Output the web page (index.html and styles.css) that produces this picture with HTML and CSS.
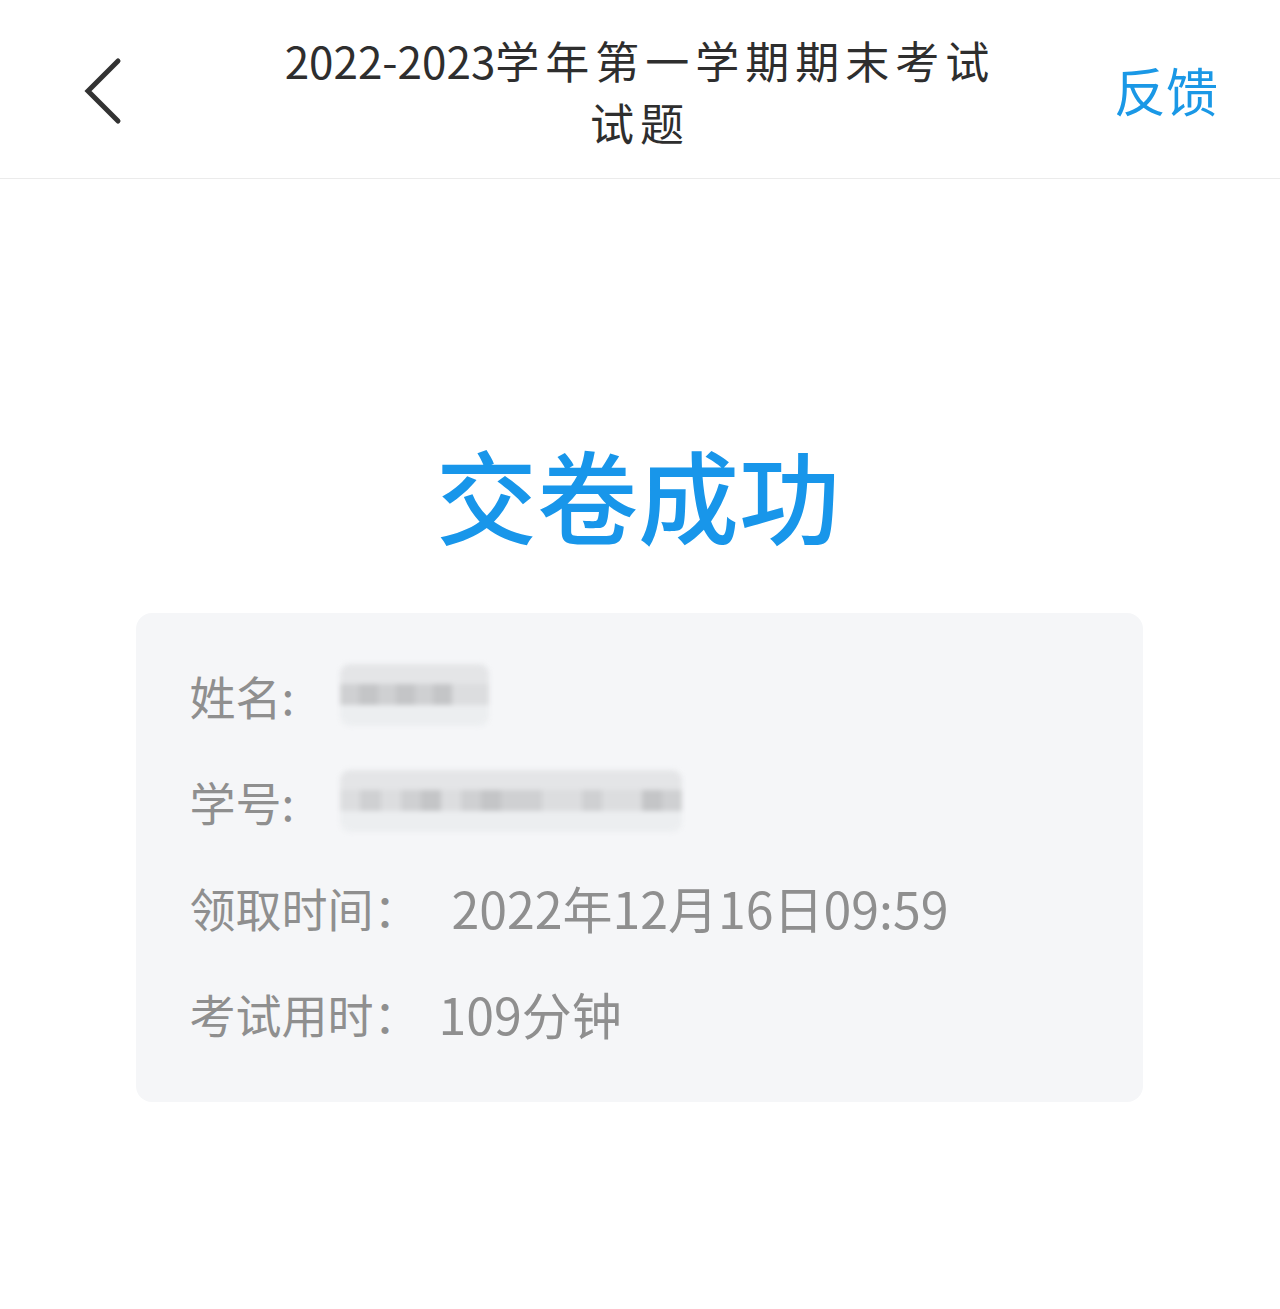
FILE: index.html
```html
<!DOCTYPE html>
<html lang="zh-CN">
<head>
<meta charset="utf-8">
<title>交卷成功</title>
<link rel="stylesheet" href="styles.css">
</head>
<body>
<header class="topbar">
  <div class="back">
    <svg width="44" height="70" viewBox="0 0 44 70"><polyline points="36,4 6,34 36,64" fill="none" stroke="#333" stroke-width="5" stroke-linecap="round" stroke-linejoin="miter"/></svg>
  </div>
  <h1 class="title">2022-2023<span class="cjk">学年第一学期期末考试</span><br><span class="cjk">试题</span></h1>
  <div class="feedback">反馈</div>
</header>
<main class="content">
  <div class="success">交卷成功</div>
  <section class="card">
    <div class="row"><span class="label">姓名:</span><span class="mask mask-name"><i class="s2"></i><i class="s3"></i><i class="s2"></i><i class="s3"></i><i class="s2"></i><i class="s3"></i><i class="s1"></i><i class="s1"></i></span></div>
    <div class="row"><span class="label">学号:</span><span class="mask mask-id"><i class="s1"></i><i class="s2"></i><i class="s1"></i><i class="s2"></i><i class="s3"></i><i class="s1"></i><i class="s2"></i><i class="s3"></i><i class="s2"></i><i class="s2"></i><i class="s1"></i><i class="s1"></i><i class="s2"></i><i class="s1"></i><i class="s1"></i><i class="s3"></i><i class="s2"></i></span></div>
    <div class="row"><span class="label">领取时间：</span><span class="value gap">2022年12月16日09:59</span></div>
    <div class="row"><span class="label">考试用时：</span><span class="value">109分钟</span></div>
  </section>
</main>
</body>
</html>
```
FILE: styles.css
```css
* { box-sizing: border-box; margin: 0; padding: 0; }
html, body { background: #ffffff; }
body {
  width: 1280px;
  height: 1309px;
  font-family: "Noto Sans CJK SC", "Noto Sans", sans-serif;
  overflow: hidden;
}
.topbar {
  height: 179px;
  border-bottom: 1px solid #ebebeb;
  display: grid;
  grid-template-columns: 200px 1fr 200px;
  align-items: center;
}
.back {
  padding-left: 82px;
  padding-top: 6px;
  display: flex;
  align-items: center;
}
.title {
  font-weight: 400;
  font-size: 44px;
  line-height: 62px;
  color: #2e2e2e;
  text-align: center;
  padding-top: 4px;
}
.title .cjk { letter-spacing: 6px; }
.feedback {
  font-size: 52px;
  color: #1a98e6;
  text-align: right;
  padding-right: 62px;
}
.content {
  display: flex;
  flex-direction: column;
  align-items: center;
}
.success {
  margin-top: 256px;
  font-size: 101px;
  line-height: 116px;
  color: #1896ea;
  font-weight: 500;
  margin-left: -4px;
}
.card {
  margin-top: 62px;
  width: 1007px;
  margin-left: -2px;
  background: #f5f6f8;
  border-radius: 16px;
  padding: 29px 54px 36px;
}
.row {
  height: 106px;
  display: flex;
  align-items: center;
  font-size: 46px;
  color: #8f8f8f;
}
.label { white-space: nowrap; }
.value { margin-left: 19px; font-size: 50px; }
.value.gap { margin-left: 32px; }
.mask {
  display: flex;
  height: 62px;
  margin-left: 46px;
  filter: blur(2.5px);
  border-radius: 10px;
  overflow: hidden;
}
.mask-name { width: 149px; }
.mask-id { width: 342px; }
.mask i {
  flex: 1;
  display: block;
  background: linear-gradient(#e4e5e7 0 33%, var(--m) 33% 66%, #eceef0 66% 100%);
}
.mask .s1 { --m: #dcdddf; }
.mask .s2 { --m: #cfd0d2; }
.mask .s3 { --m: #c4c5c7; }
```
